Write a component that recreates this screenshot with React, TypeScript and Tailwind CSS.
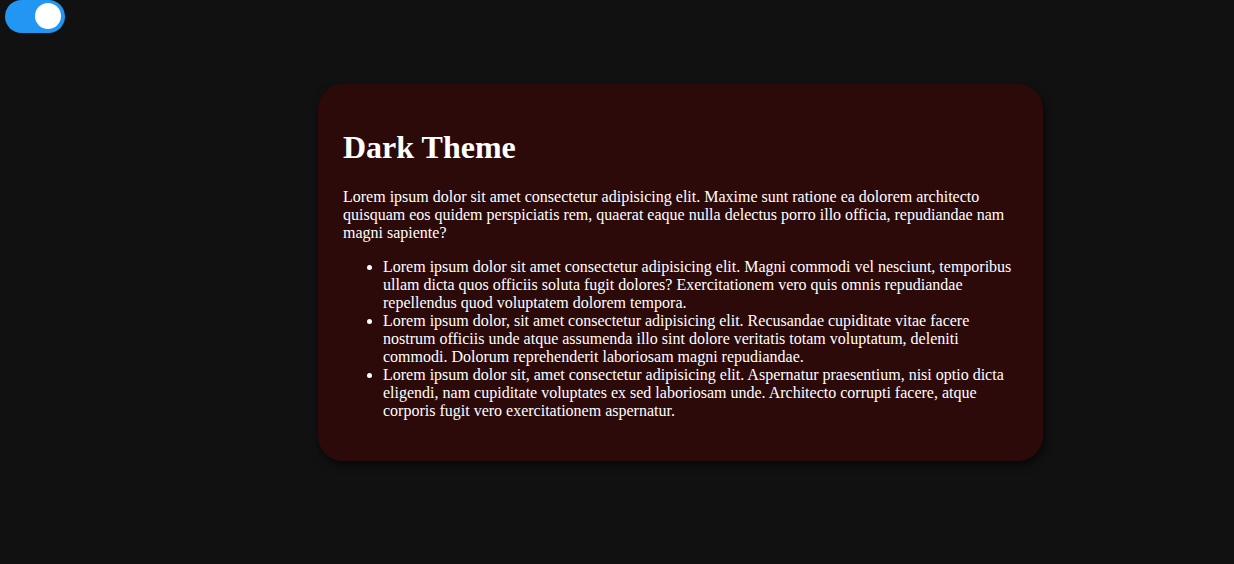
export default function App() {
  return (
    <div className="min-h-[564px] bg-[#111111] font-['Liberation_Serif',serif] text-white">
      <div className="relative ml-[5px] h-[33px] w-[60px] rounded-full bg-[#2196f3]">
        <span className="absolute left-[30px] top-[3px] h-[26px] w-[26px] rounded-full bg-white" />
      </div>
      <div className="ml-[318px] mt-[51px] w-[725px] rounded-[25px] bg-[#2c0a0a] px-[25px] py-[25px] shadow-[2px_4px_8px_rgba(0,0,0,0.6)]">
        <h1 className="mt-[20px] mb-[22px] text-[32px] font-bold leading-[37px]">Dark Theme</h1>
        <p className="my-4 text-base leading-[18px]">
          Lorem ipsum dolor sit amet consectetur adipisicing elit. Maxime sunt ratione ea dolorem architecto
          quisquam eos quidem perspiciatis rem, quaerat eaque nulla delectus porro illo officia, repudiandae nam
          magni sapiente?
        </p>
        <ul className="my-4 list-disc pl-10 text-base leading-[18px]">
          <li>
            Lorem ipsum dolor sit amet consectetur adipisicing elit. Magni commodi vel nesciunt, temporibus ullam
            dicta quos officiis soluta fugit dolores? Exercitationem vero quis omnis repudiandae repellendus quod
            voluptatem dolorem tempora.
          </li>
          <li>
            Lorem ipsum dolor, sit amet consectetur adipisicing elit. Recusandae cupiditate vitae facere nostrum
            officiis unde atque assumenda illo sint dolore veritatis totam voluptatum, deleniti commodi. Dolorum
            reprehenderit laboriosam magni repudiandae.
          </li>
          <li>
            Lorem ipsum dolor sit, amet consectetur adipisicing elit. Aspernatur praesentium, nisi optio dicta
            eligendi, nam cupiditate voluptates ex sed laboriosam unde. Architecto corrupti facere, atque corporis
            fugit vero exercitationem aspernatur.
          </li>
        </ul>
      </div>
    </div>
  );
}
